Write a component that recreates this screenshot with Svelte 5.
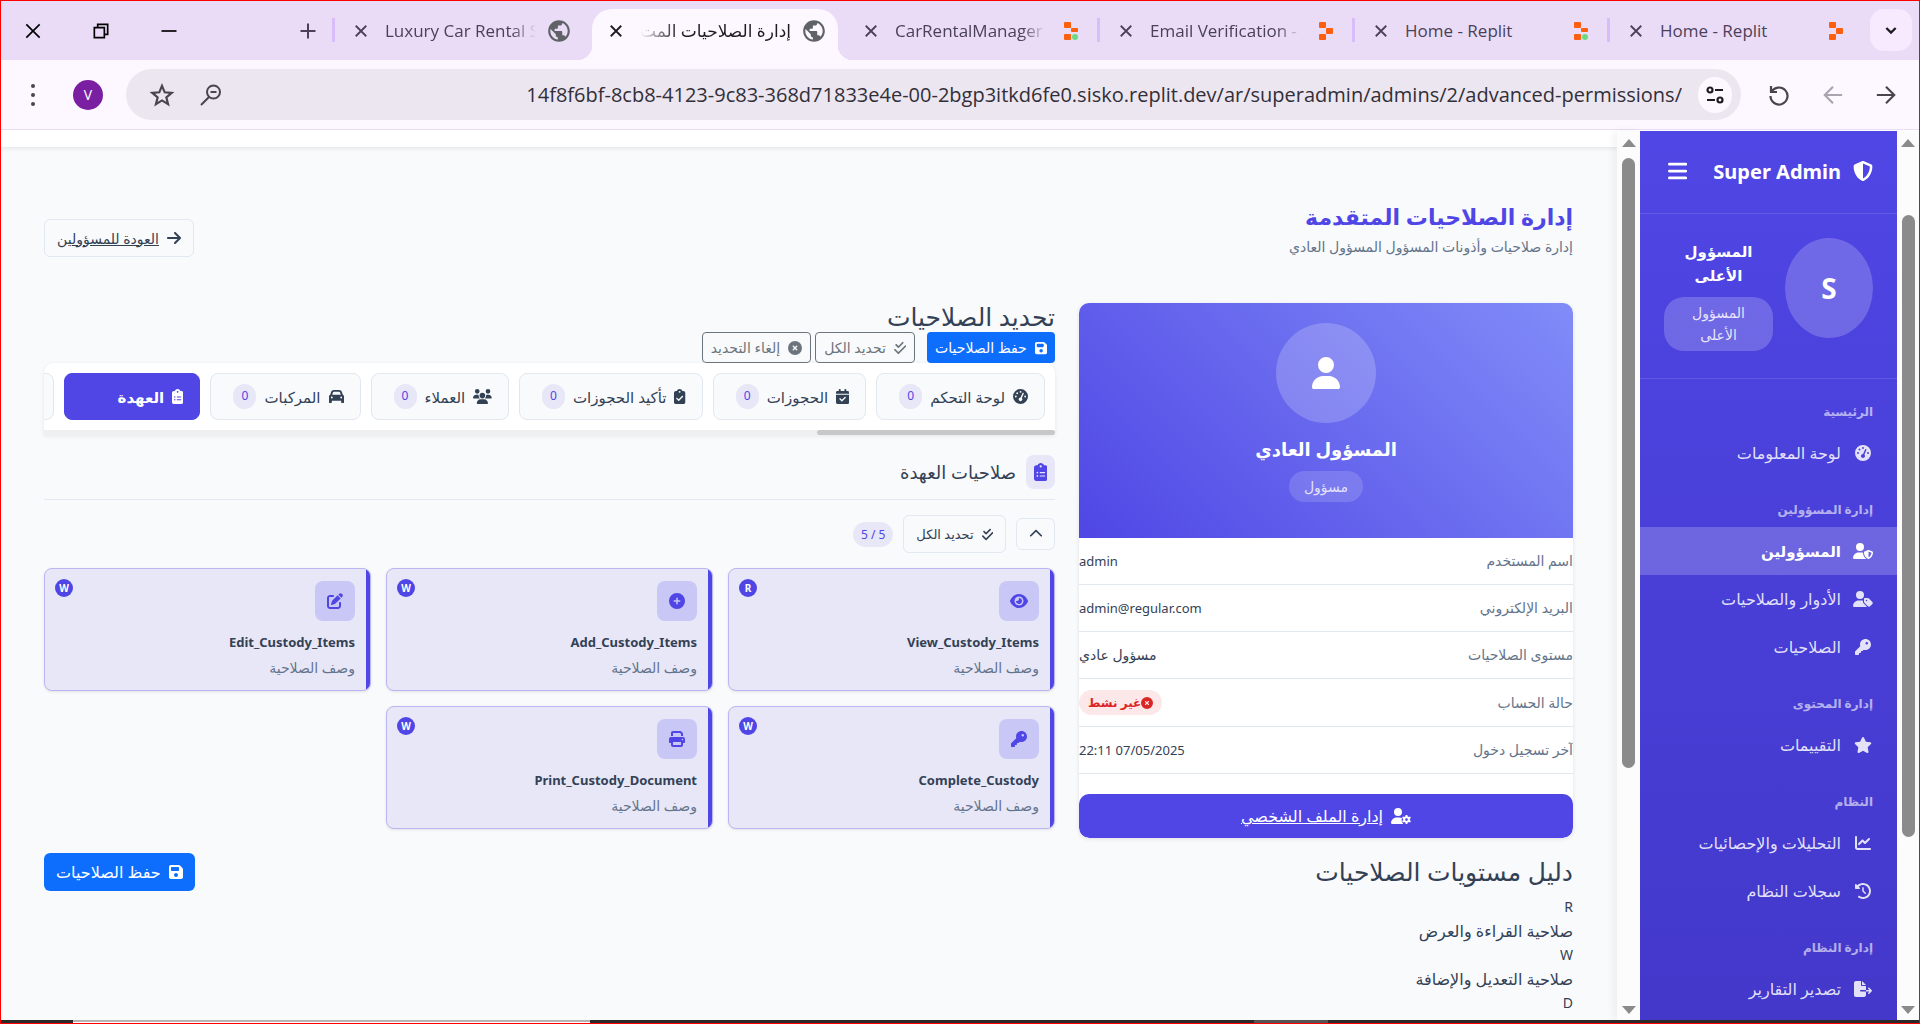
<script>
  const person = 'M224 256A128 128 0 1 0 224 0a128 128 0 1 0 0 256z';
  const board = 'M192 0c-41.8 0-77.4 26.7-90.5 64H64C28.7 64 0 92.7 0 128V448c0 35.3 28.7 64 64 64H320c35.3 0 64-28.7 64-64V128c0-35.3-28.7-64-64-64H282.5C269.4 26.7 233.8 0 192 0zm0 64a32 32 0 1 1 0 64 32 32 0 1 1 0-64z';

  function gear(cx, cy, teeth, outer, inner) {
    const points = [];
    const step = (Math.PI * 2) / teeth;
    for (let i = 0; i < teeth; i++) {
      const a = i * step;
      for (const [offset, r] of [[-0.3, inner], [-0.18, outer], [0.18, outer], [0.3, inner]]) {
        points.push(`${(cx + Math.sin(a + offset * step) * r).toFixed(1)} ${(cy - Math.cos(a + offset * step) * r).toFixed(1)}`);
      }
    }
    return `M${points.join('L')}zM${cx - 44} ${cy}a44 44 0 1 0 88 0 44 44 0 1 0 -88 0z`;
  }

  const icons = {
    user: [448, person + 'M178.3 304C79.8 304 0 383.8 0 482.3C0 498.7 13.3 512 29.7 512H418.3c16.4 0 29.7-13.3 29.7-29.7C448 383.8 368.2 304 269.7 304H178.3z'],
    shield: [512, 'M256 0c4.6 0 9.2 1 13.4 2.9L457.7 82.8c22 9.3 38.4 31 38.3 57.2c-.5 99.2-41.3 280.7-213.6 363.2c-16.7 8-36.1 8-52.8 0C57.3 420.7 16.5 239.2 16 140c-.1-26.2 16.3-47.9 38.3-57.2L242.7 2.9C246.8 1 251.4 0 256 0zm0 66.8V444.8C394 378 431.1 230.1 432 141.4L256 66.8z'],
    bars: [448, 'M0 96C0 78.3 14.3 64 32 64H416c17.7 0 32 14.3 32 32s-14.3 32-32 32H32C14.3 128 0 113.7 0 96zM0 256c0-17.7 14.3-32 32-32H416c17.7 0 32 14.3 32 32s-14.3 32-32 32H32c-17.7 0-32-14.3-32-32zM448 416c0 17.7-14.3 32-32 32H32c-17.7 0-32-14.3-32-32s14.3-32 32-32H416c17.7 0 32 14.3 32 32z'],
    gauge: [512, 'M0 256a256 256 0 1 1 512 0A256 256 0 1 1 0 256zM288 96a32 32 0 1 0 -64 0 32 32 0 1 0 64 0zM256 416c35.3 0 64-28.7 64-64c0-17.4-6.9-33.1-18.1-44.6L366 161.7c5.3-12.1-.2-26.3-12.3-31.6s-26.3 .2-31.6 12.3L257.9 288c-.6 0-1.3 0-1.9 0c-35.3 0-64 28.7-64 64s28.7 64 64 64zM176 144a32 32 0 1 0 -64 0 32 32 0 1 0 64 0zM96 288a32 32 0 1 0 0-64 32 32 0 1 0 0 64zm352-32a32 32 0 1 0 -64 0 32 32 0 1 0 64 0z'],
    key: [512, 'M336 352c97.2 0 176-78.8 176-176S433.2 0 336 0S160 78.8 160 176c0 18.7 2.9 36.8 8.3 53.7L7 391c-4.5 4.5-7 10.6-7 17v80c0 13.3 10.7 24 24 24h80c13.3 0 24-10.7 24-24V448h40c13.3 0 24-10.7 24-24V384h40c6.4 0 12.5-2.5 17-7l33.3-33.3c16.9 5.4 35 8.3 53.7 8.3zM376 96a40 40 0 1 1 0 80 40 40 0 1 1 0-80z'],
    star: [576, 'M316.9 18C311.6 7 300.4 0 288.1 0s-23.4 7-28.8 18L195 150.3 51.4 171.5c-12 1.8-22 10.2-25.7 21.7s-.7 24.2 7.9 32.7L137.8 329 113.2 474.7c-2 12 3 24.2 12.9 31.3s23 8 33.8 2.3l128.3-68.5 128.3 68.5c10.8 5.7 23.9 4.9 33.8-2.3s14.9-19.3 12.9-31.3L438.5 329 542.7 225.9c8.6-8.5 11.7-21.2 7.9-32.7s-13.7-19.9-25.7-21.7L381.2 150.3 316.9 18z'],
    chart: [512, 'M64 64c0-17.7-14.3-32-32-32S0 46.3 0 64V400c0 44.2 35.8 80 80 80H480c17.7 0 32-14.3 32-32s-14.3-32-32-32H80c-8.8 0-16-7.2-16-16V64zm406.6 86.6c12.5-12.5 12.5-32.8 0-45.3s-32.8-12.5-45.3 0L320 210.7l-57.4-57.4c-12.5-12.5-32.8-12.5-45.3 0l-112 112c-12.5 12.5-12.5 32.8 0 45.3s32.8 12.5 45.3 0L240 221.3l57.4 57.4c12.5 12.5 32.8 12.5 45.3 0l128-128z'],
    history: [512, 'M75 75L41 41C25.9 25.9 0 36.6 0 57.9V168c0 13.3 10.7 24 24 24H134.1c21.4 0 32.1-25.9 17-41l-30.8-30.8C155 85.5 203 64 256 64c106 0 192 86 192 192s-86 192-192 192c-40.8 0-78.6-12.7-109.7-34.4c-14.5-10.1-34.4-6.6-44.6 7.9s-6.6 34.4 7.9 44.6C151.2 495 201.7 512 256 512c141.4 0 256-114.6 256-256S397.4 0 256 0C185.3 0 121.3 28.7 75 75zm181 53c-13.3 0-24 10.7-24 24V256c0 6.4 2.5 12.5 7 17l72 72c9.4 9.4 24.6 9.4 33.9 0s9.4-24.6 0-33.9l-65-65V152c0-13.3-10.7-24-24-24z'],
    fileExport: [576, 'M0 64C0 28.7 28.7 0 64 0H224V128c0 17.7 14.3 32 32 32H384V288H216c-13.3 0-24 10.7-24 24s10.7 24 24 24H384V448c0 35.3-28.7 64-64 64H64c-35.3 0-64-28.7-64-64V64zM384 336V288H494.1l-39-39c-9.4-9.4-9.4-24.6 0-33.9s24.6-9.4 33.9 0l80 80c9.4 9.4 9.4 24.6 0 33.9l-80 80c-9.4 9.4-24.6 9.4-33.9 0s-9.4-24.6 0-33.9l39-39H384zm0-208H256V0L384 128z'],
    save: [448, 'M64 32C28.7 32 0 60.7 0 96V416c0 35.3 28.7 64 64 64H384c35.3 0 64-28.7 64-64V173.3c0-17-6.7-33.3-18.7-45.3L352 50.7C340 38.7 323.7 32 306.7 32H64zm0 96c0-17.7 14.3-32 32-32H288c17.7 0 32 14.3 32 32v64c0 17.7-14.3 32-32 32H96c-17.7 0-32-14.3-32-32V128zM224 288a64 64 0 1 1 0 128 64 64 0 1 1 0-128z'],
    checks: [448, 'M342.6 86.6c12.5-12.5 12.5-32.8 0-45.3s-32.8-12.5-45.3 0L160 178.7l-57.4-57.4c-12.5-12.5-32.8-12.5-45.3 0s-12.5 32.8 0 45.3l80 80c12.5 12.5 32.8 12.5 45.3 0l160-160zm96 128c12.5-12.5 12.5-32.8 0-45.3s-32.8-12.5-45.3 0L160 402.7 54.6 297.4c-12.5-12.5-32.8-12.5-45.3 0s-12.5 32.8 0 45.3l128 128c12.5 12.5 32.8 12.5 45.3 0l256-256z'],
    cross: [512, 'M256 512A256 256 0 1 0 256 0a256 256 0 1 0 0 512zM175 175c9.4-9.4 24.6-9.4 33.9 0l47 47 47-47c9.4-9.4 24.6-9.4 33.9 0s9.4 24.6 0 33.9l-47 47 47 47c9.4 9.4 9.4 24.6 0 33.9s-24.6 9.4-33.9 0l-47-47-47 47c-9.4 9.4-24.6 9.4-33.9 0s-9.4-24.6 0-33.9l47-47-47-47c-9.4-9.4-9.4-24.6 0-33.9z'],
    plus: [512, 'M256 512A256 256 0 1 0 256 0a256 256 0 1 0 0 512zM232 344V280H168c-13.3 0-24-10.7-24-24s10.7-24 24-24h64V168c0-13.3 10.7-24 24-24s24 10.7 24 24v64h64c13.3 0 24 10.7 24 24s-10.7 24-24 24H280v64c0 13.3-10.7 24-24 24s-24-10.7-24-24z'],
    calendar: [448, 'M128 0c17.7 0 32 14.3 32 32V64H288V32c0-17.7 14.3-32 32-32s32 14.3 32 32V64h48c26.5 0 48 21.5 48 48v48H0V112C0 85.5 21.5 64 48 64H96V32c0-17.7 14.3-32 32-32zM0 192H448V464c0 26.5-21.5 48-48 48H48c-26.5 0-48-21.5-48-48V192zM329 305c9.4-9.4 9.4-24.6 0-33.9s-24.6-9.4-33.9 0l-95 95-47-47c-9.4-9.4-24.6-9.4-33.9 0s-9.4 24.6 0 33.9l64 64c9.4 9.4 24.6 9.4 33.9 0L329 305z'],
    clipCheck: [384, board + 'M305 273L177 401c-9.4 9.4-24.6 9.4-33.9 0L79 337c-9.4-9.4-9.4-24.6 0-33.9s24.6-9.4 33.9 0l47 47L271 239c9.4-9.4 24.6-9.4 33.9 0s9.4 24.6 0 33.9z'],
    clipList: [384, board + 'M72 272a24 24 0 1 1 48 0 24 24 0 1 1 -48 0zm104-16H304c8.8 0 16 7.2 16 16s-7.2 16-16 16H176c-8.8 0-16-7.2-16-16s7.2-16 16-16zM72 368a24 24 0 1 1 48 0 24 24 0 1 1 -48 0zm88 0c0-8.8 7.2-16 16-16H304c8.8 0 16 7.2 16 16s-7.2 16-16 16H176c-8.8 0-16-7.2-16-16z'],
    users: [640, 'M144 0a80 80 0 1 1 0 160A80 80 0 1 1 144 0zM512 0a80 80 0 1 1 0 160A80 80 0 1 1 512 0zM0 298.7C0 239.8 47.8 192 106.7 192h42.7c15.9 0 31 3.5 44.6 9.7c-1.3 7.2-1.9 14.7-1.9 22.3c0 38.2 16.8 72.5 43.3 96c-.2 0-.4 0-.7 0H21.3C9.6 320 0 310.4 0 298.7zM405.3 320c-.2 0-.4 0-.7 0c26.6-23.5 43.3-57.8 43.3-96c0-7.6-.7-15-1.9-22.3c13.6-6.3 28.7-9.7 44.6-9.7h42.7C592.2 192 640 239.8 640 298.7c0 11.8-9.6 21.3-21.3 21.3H405.3zM224 224a96 96 0 1 1 192 0 96 96 0 1 1 -192 0zM128 485.3C128 411.7 187.7 352 261.3 352H378.7C452.3 352 512 411.7 512 485.3c0 14.7-11.9 26.7-26.7 26.7H154.7c-14.7 0-26.7-11.9-26.7-26.7z'],
    car: [512, 'M135.2 117.4L109.1 192H402.9l-26.1-74.6C372.3 104.6 360.2 96 346.6 96H165.4c-13.6 0-25.7 8.6-30.2 21.4zM39.6 196.8L74.8 96.3C88.3 57.8 124.6 32 165.4 32H346.6c40.8 0 77.1 25.8 90.6 64.3l35.2 100.5c23.2 9.6 39.6 32.5 39.6 59.2V400v48c0 17.7-14.3 32-32 32H448c-17.7 0-32-14.3-32-32V400H96v48c0 17.7-14.3 32-32 32H32c-17.7 0-32-14.3-32-32V400 256c0-26.7 16.4-49.6 39.6-59.2zM128 288a32 32 0 1 0 -64 0 32 32 0 1 0 64 0zm288 32a32 32 0 1 0 0-64 32 32 0 1 0 0 64z'],
    arrow: [448, 'M438.6 278.6c12.5-12.5 12.5-32.8 0-45.3l-160-160c-12.5-12.5-32.8-12.5-45.3 0s-12.5 32.8 0 45.3L338.8 224 32 224c-17.7 0-32 14.3-32 32s14.3 32 32 32l306.7 0L233.4 393.4c-12.5 12.5-12.5 32.8 0 45.3s32.8 12.5 45.3 0l160-160z'],
    up: [512, 'M233.4 105.4c12.5-12.5 32.8-12.5 45.3 0l192 192c12.5 12.5 12.5 32.8 0 45.3s-32.8 12.5-45.3 0L256 173.3 86.6 342.6c-12.5 12.5-32.8 12.5-45.3 0s-12.5-32.8 0-45.3l192-192z'],
    eye: [576, 'M288 32c-80.8 0-145.5 36.8-192.6 80.6C48.6 156 17.3 208 2.5 243.7c-3.3 7.9-3.3 16.7 0 24.6C17.3 304 48.6 356 95.4 399.4C142.5 443.2 207.2 480 288 480s145.5-36.8 192.6-80.6c46.8-43.5 78.1-95.4 93-131.1c3.3-7.9 3.3-16.7 0-24.6c-14.9-35.7-46.2-87.7-93-131.1C433.5 68.8 368.8 32 288 32zM144 256a144 144 0 1 1 288 0 144 144 0 1 1 -288 0zm144-64c0 35.3-28.7 64-64 64c-7.1 0-13.9-1.2-20.3-3.3c-5.5-1.8-11.9 1.6-11.7 7.4c.3 6.9 1.3 13.8 3.2 20.7c13.7 51.2 66.4 81.6 117.6 67.9s81.6-66.4 67.9-117.6c-11.1-41.5-47.8-69.4-88.6-71.1c-5.8-.2-9.2 6.1-7.4 11.7c2.1 6.4 3.3 13.2 3.3 20.3z'],
    print: [512, 'M128 0C92.7 0 64 28.7 64 64v96h64V64H354.7L384 93.3V160h64V93.3c0-17-6.7-33.3-18.7-45.3L400 18.7C388 6.7 371.7 0 354.7 0H128zM384 352v96H128V352H384zm64 32h32c17.7 0 32-14.3 32-32V256c0-35.3-28.7-64-64-64H64c-35.3 0-64 28.7-64 64v96c0 17.7 14.3 32 32 32H64v64c0 35.3 28.7 64 64 64H384c35.3 0 64-28.7 64-64V384zM432 248a24 24 0 1 1 0 48 24 24 0 1 1 0-48z'],
    edit: [512, 'M471.6 21.7c-21.9-21.9-57.3-21.9-79.2 0L362.3 51.7l97.9 97.9 30.1-30.1c21.9-21.9 21.9-57.3 0-79.2L471.6 21.7zm-299.2 220c-6.1 6.1-10.8 13.6-13.5 21.9l-29.6 88.8c-2.9 8.6-.6 18.1 5.8 24.6s15.9 8.7 24.6 5.8l88.8-29.6c8.2-2.7 15.7-7.4 21.9-13.5L437.7 172.3 339.7 74.3 172.4 241.7zM96 64C43 64 0 107 0 160V416c0 53 43 96 96 96H352c53 0 96-43 96-96V320c0-17.7-14.3-32-32-32s-32 14.3-32 32v96c0 17.7-14.3 32-32 32H96c-17.7 0-32-14.3-32-32V160c0-17.7 14.3-32 32-32h96c17.7 0 32-14.3 32-32s-14.3-32-32-32H96z'],
    userShield: [640, person + 'M178.3 304C79.8 304 0 383.8 0 482.3C0 498.7 13.3 512 29.7 512H418.3c1.8 0 3.5-.2 5.3-.5c-76.3-55.1-99.8-141-103.1-200.2c-16.1-4.8-33.1-7.3-50.7-7.3H178.3zm308.8-78.3l-120 48C358 277.4 352 286.2 352 296c0 63.3 25.9 168.8 134.8 214.2c5.9 2.5 12.6 2.5 18.5 0C614.1 464.8 640 359.3 640 296c0-9.8-6-18.6-15.1-22.3l-120-48c-5.7-2.3-12.1-2.3-17.8 0zM591.4 312c-3.9 50.7-27.2 116.7-95.4 149.7V273.8L591.4 312z'],
    userTag: [640, person + 'M178.3 304C79.8 304 0 383.8 0 482.3C0 498.7 13.3 512 29.7 512H418.3c10 0 18.8-4.9 24.2-12.5l-99.2-99.2c-14.9-14.9-23.3-35.1-23.3-56.1v-33c-15.9-4.7-32.8-7.2-50.3-7.2H178.3zM384 224c-17.7 0-32 14.3-32 32v82.7c0 17 6.7 33.3 18.7 45.3L478.1 491.3c18.7 18.7 49.1 18.7 67.9 0l73.4-73.4c18.7-18.7 18.7-49.1 0-67.9L512 242.7c-12-12-28.3-18.7-45.3-18.7H384zm24 80a24 24 0 1 1 48 0 24 24 0 1 1 -48 0z'],
    userGear: [640, person + 'M178.3 304C79.8 304 0 383.8 0 482.3C0 498.7 13.3 512 29.7 512H392c-30-34-48-70-52-110c-2-30 4-60 12-79c-25-12-52-19-82.300-19H178.3z' + gear(496, 368, 6, 150, 108)]
  };

  const browserTabs = [
    { title: 'Luxury Car Rental S', icon: 'globe' },
    { title: 'إدارة الصلاحيات المت', icon: 'globe', active: true },
    { title: 'CarRentalManager', icon: 'dot' },
    { title: 'Email Verification -', icon: 'replit', line: true },
    { title: 'Home - Replit', icon: 'dot', line: true },
    { title: 'Home - Replit', icon: 'replit', line: true }
  ];

  const menu = [
    { title: 'الرئيسية', items: [{ icon: 'gauge', text: 'لوحة المعلومات' }] },
    {
      title: 'إدارة المسؤولين',
      items: [
        { icon: 'userShield', text: 'المسؤولين', active: true },
        { icon: 'userTag', text: 'الأدوار والصلاحيات' },
        { icon: 'key', text: 'الصلاحيات' }
      ]
    },
    { title: 'إدارة المحتوى', items: [{ icon: 'star', text: 'التقييمات' }] },
    {
      title: 'النظام',
      items: [
        { icon: 'chart', text: 'التحليلات والإحصائيات' },
        { icon: 'history', text: 'سجلات النظام' }
      ]
    },
    { title: 'إدارة النظام', items: [{ icon: 'fileExport', text: 'تصدير التقارير' }] }
  ];

  const details = [
    ['اسم المستخدم', 'admin'],
    ['البريد الإلكتروني', 'admin@regular.com'],
    ['مستوى الصلاحيات', 'مسؤول عادي'],
    ['حالة الحساب', null],
    ['آخر تسجيل دخول', '22:11 07/05/2025']
  ];

  const guide = ['R', 'صلاحية القراءة والعرض', 'W', 'صلاحية التعديل والإضافة', 'D'];

  const groups = [
    { icon: 'gauge', text: 'لوحة التحكم', count: 0 },
    { icon: 'calendar', text: 'الحجوزات', count: 0 },
    { icon: 'clipCheck', text: 'تأكيد الحجوزات', count: 0 },
    { icon: 'users', text: 'العملاء', count: 0 },
    { icon: 'car', text: 'المركبات', count: 0 },
    { icon: 'clipList', text: 'العهدة', active: true }
  ];

  const permissions = [
    { icon: 'eye', name: 'View_Custody_Items', level: 'R' },
    { icon: 'plus', name: 'Add_Custody_Items', level: 'W' },
    { icon: 'edit', name: 'Edit_Custody_Items', level: 'W' },
    { icon: 'key', name: 'Complete_Custody', level: 'W' },
    { icon: 'print', name: 'Print_Custody_Document', level: 'W' }
  ];
</script>

{#snippet fa(name)}
  <svg class="fa" viewBox="0 0 {icons[name][0]} 512" style:width="{icons[name][0] / 512}em" aria-hidden="true">
    <path d={icons[name][1]} fill="currentColor" fill-rule="evenodd" />
  </svg>
{/snippet}

{#snippet line(d, size, width)}
  <svg width={size} height={size} viewBox="0 0 24 24" fill="none" stroke="currentColor" stroke-width={width} aria-hidden="true">
    <path {d} />
  </svg>
{/snippet}

{#snippet scrollbar(kind)}
  <div class="scrollbar {kind}" aria-hidden="true">
    <i class="tri"></i>
    <i class="before"></i>
    <i class="thumb"></i>
    <i class="after"></i>
    <i class="tri down"></i>
  </div>
{/snippet}

<div class="window">
  <header class="strip">
    <div class="controls">
      <button aria-label="Close">{@render line('M4 4L20 20M20 4L4 20', 20, 2)}</button>
      <button aria-label="Restore">{@render line('M4 8h12v12H4zM8 8V4h12v12h-4', 20, 2)}</button>
      <button aria-label="Minimize">{@render line('M3 12h18', 20, 2)}</button>
    </div>
    <button class="new-tab" aria-label="New tab">{@render line('M12 3v18M3 12h18', 20, 2.4)}</button>
    <nav class="tabs">
      {#each browserTabs as tab, i}
        <div class="tab" class:active={tab.active} class:line={tab.line || i === 0}>
          <div class="tab-body">
            <button aria-label="Close tab">{@render line('M5 5L19 19M19 5L5 19', 18, 2.4)}</button>
            <a href="#tab{i}" class="tab-title" class:fade={i < 4} dir={tab.active ? 'rtl' : 'ltr'}>{tab.title}</a>
            {#if tab.icon === 'globe'}
              <svg width="26" height="26" viewBox="0 0 24 24" aria-hidden="true">
                <path fill="#5f6368" d="M12 2C6.480 2 2 6.480 2 12s4.480 10 10 10 10-4.480 10-10S17.520 2 12 2zm-1 17.930c-3.950-.49-7-3.850-7-7.930 0-.62.08-1.210.21-1.790L9 15v1c0 1.100.9 2 2 2v1.930zm6.900-2.540c-.26-.81-1-1.390-1.900-1.390h-1v-3c0-.55-.45-1-1-1H8v-2h2c.55 0 1-.45 1-1V7h2c1.100 0 2-.9 2-2v-.41c2.930 1.190 5 4.060 5 7.410 0 2.080-.8 3.970-2.100 5.390z" />
              </svg>
            {:else}
              <svg class="replit" width="20" height="20" viewBox="0 0 20 20" aria-hidden="true">
                <rect x="3" y="1" width="7" height="6" rx="1" fill="#fd5f0e" />
                <rect x="10" y="7" width="7" height={tab.icon === 'dot' ? 4 : 6} rx="1" fill="#fd5f0e" />
                <rect x="3" y="13" width="7" height="6" rx="1" fill="#fd5f0e" />
                {#if tab.icon === 'dot'}<circle cx="14" cy="16" r="3" fill="#6cd97e" />{/if}
              </svg>
            {/if}
          </div>
        </div>
      {/each}
    </nav>
    <button class="tab-search" aria-label="Search tabs">{@render line('M5 9l7 7 7-7', 16, 3.4)}</button>
  </header>

  <div class="toolbar">
    <button class="dots" aria-label="Menu"><i></i><i></i><i></i></button>
    <button class="account">V</button>
    <div class="omnibox">
      <button aria-label="Bookmark">
        <svg width="26" height="26" viewBox="0 0 24 24" fill="none" stroke="currentColor" stroke-width="2" aria-hidden="true"><path d="M12 3.500l2.500 6 6.500.5-5 4.200 1.600 6.300L12 17l-5.600 3.500L8 14.200 3 10l6.500-.5z" /></svg>
      </button>
      <button aria-label="Zoom">
        <svg width="24" height="24" viewBox="0 0 24 24" fill="none" stroke="currentColor" stroke-width="2" aria-hidden="true"><circle cx="14.500" cy="9" r="6.500" /><path d="M10 14l-8 8M11.500 9h6" /></svg>
      </button>
      <input aria-label="Address" dir="ltr" value="14f8f6bf-8cb8-4123-9c83-368d71833e4e-00-2bgp3itkd6fe0.sisko.replit.dev/ar/superadmin/admins/2/advanced-permissions/" />
      <button class="site" aria-label="Site settings">
        <svg width="20" height="20" viewBox="0 0 20 20" fill="none" stroke="currentColor" stroke-width="2.200" aria-hidden="true"><circle cx="5" cy="5" r="2.500" /><path d="M10 5h8M2 15h8" /><circle cx="15" cy="15" r="2.500" /></svg>
      </button>
    </div>
    <button aria-label="Reload">
      <svg width="24" height="24" viewBox="0 0 24 24" fill="none" stroke="currentColor" stroke-width="2.200" aria-hidden="true"><path d="M4 3v6h6M4.500 9a8.500 8.500 0 1 1-1 4" /></svg>
    </button>
    <button class="off" aria-label="Back">{@render line('M22 12H4M12 3L3 12l9 9', 22, 2.3)}</button>
    <button aria-label="Forward">{@render line('M2 12h18M12 3l9 9-9 9', 22, 2.3)}</button>
  </div>

  <div class="view">
    <div class="main-pane" dir="rtl">
      <div class="navbar"></div>
      <main>
        <div class="page-head">
          <div>
            <h1>إدارة الصلاحيات المتقدمة</h1>
            <p>إدارة صلاحيات وأذونات المسؤول المسؤول العادي</p>
          </div>
          <a class="back" href="#admins"><i>{@render fa('arrow')}</i><span>العودة للمسؤولين</span></a>
        </div>

        <div class="columns">
          <section class="side">
            <div class="profile">
              <div class="profile-head">
                <div class="avatar">{@render fa('user')}</div>
                <h2>المسؤول العادي</h2>
                <span class="role">مسؤول</span>
              </div>
              <dl>
                {#each details as [label, value]}
                  <div>
                    <dt>{label}</dt>
                    <dd class:arabic={/[ء-ي]/.test(value ?? '')}>
                      {#if value}<bdi>{value}</bdi>{:else}<span class="status">{@render fa('cross')}غير نشط</span>{/if}
                    </dd>
                  </div>
                {/each}
              </dl>
              <a class="manage" href="#profile">{@render fa('userGear')}<span>إدارة الملف الشخصي</span></a>
            </div>
            <h3>دليل مستويات الصلاحيات</h3>
            <div class="guide">
              {#each guide as text}<div class:letter={text.length === 1}>{text}</div>{/each}
            </div>
          </section>

          <section class="work">
            <h3>تحديد الصلاحيات</h3>
            <div class="actions">
              <button class="save small">{@render fa('save')}حفظ الصلاحيات</button>
              <button class="outline first">{@render fa('checks')}تحديد الكل</button>
              <button class="outline">{@render fa('cross')}إلغاء التحديد</button>
            </div>

            <div class="group-box">
              <div class="groups">
                {#each groups as group}
                  <button class="group" class:on={group.active}>
                    {@render fa(group.icon)}<span>{group.text}</span><b>{group.count ?? ''}</b>
                  </button>
                {/each}
                <button class="group" aria-label="التالي"></button>
              </div>
              <div class="hbar"><i></i></div>
            </div>

            <div class="section-head">
              <span class="chip">{@render fa('clipList')}</span>
              <h4>صلاحيات العهدة</h4>
            </div>

            <div class="section-tools">
              <button class="fold" aria-label="طي">{@render fa('up')}</button>
              <button class="all">{@render fa('checks')}تحديد الكل</button>
              <span class="tally" dir="ltr">5 / 5</span>
            </div>

            <div class="cards">
              {#each permissions as item}
                <article>
                  <span class="level">{item.level}</span>
                  <span class="tile">{@render fa(item.icon)}</span>
                  <h5>{item.name}</h5>
                  <p>وصف الصلاحية</p>
                </article>
              {/each}
            </div>

            <div class="submit"><button class="save">{@render fa('save')}حفظ الصلاحيات</button></div>
          </section>
        </div>
      </main>
    </div>

    {@render scrollbar('inner')}

    <aside dir="rtl">
      <div class="brand">
        {@render fa('shield')}
        <strong>Super Admin</strong>
        <button aria-label="القائمة">{@render fa('bars')}</button>
      </div>
      <div class="me">
        <div class="initial">S</div>
        <div class="who">
          <strong>المسؤول الأعلى</strong>
          <span>المسؤول الأعلى</span>
        </div>
      </div>
      <nav>
        {#each menu as part}
          <h6>{part.title}</h6>
          {#each part.items as item}
            <a href="#{item.icon}" class:current={item.active}><i>{@render fa(item.icon)}</i>{item.text}</a>
          {/each}
        {/each}
      </nav>
    </aside>

    {@render scrollbar('outer')}
  </div>

  <div class="taskbar"><i class="pale"></i><i class="mid"></i></div>
</div>

<style>
  :global(body) {
    margin: 0;
    background: #fff;
  }
  .window {
    --ink: #334155;
    --muted: #64748b;
    --brand: #4f46e5;
    --line: #e2e8f0;
    box-sizing: border-box;
    height: 100vh;
    display: flex;
    flex-direction: column;
    overflow: hidden;
    border: 1px solid #f00;
    font-family: 'Noto Sans', 'DejaVu Sans', sans-serif;
    color: var(--ink);
  }
  .window :global(*) {
    box-sizing: border-box;
  }
  button {
    border: 0;
    padding: 0;
    background: none;
    font: inherit;
    color: inherit;
    display: flex;
    align-items: center;
    justify-content: center;
    flex: none;
  }
  h1, h2, h3, h4, h5, h6, p, dl, dd {
    margin: 0;
    font-weight: 400;
  }
  svg {
    flex: none;
    display: block;
  }
  .fa {
    height: 1em;
  }

  /* Browser frame */
  .strip {
    flex: none;
    height: 59px;
    display: flex;
    background: #eadcf7;
    font-family: 'Open Sans', 'DejaVu Sans', sans-serif;
    color: #4a4159;
  }
  .controls {
    display: flex;
    align-items: center;
    padding-left: 22px;
    gap: 48px;
    color: #000;
  }
  .new-tab {
    margin: 0 14px 0 auto;
  }
  .tabs {
    display: flex;
    flex: 0 1 1530px;
    min-width: 0;
  }
  .tab {
    flex: 1;
    min-width: 0;
    display: flex;
    align-items: center;
    padding: 8px 4px 0 5px;
    background: linear-gradient(#d9bdfb, #d9bdfb) 0 17px / 3px 24px no-repeat;
  }
  .tab:not(.line) {
    background: none;
  }
  .tab-body {
    position: relative;
    flex: 1;
    min-width: 0;
    height: 51px;
    display: flex;
    align-items: center;
    gap: 10px;
    padding: 0 11px 7px 15px;
  }
  .tab-body button {
    margin-right: 5px;
  }
  .tab-title {
    flex: 1;
    min-width: 0;
    overflow: hidden;
    white-space: nowrap;
    color: inherit;
    text-decoration: none;
    font-size: 17px;
    line-height: 34px;
  }
  .fade {
    mask-image: linear-gradient(to right, #000 84%, transparent);
  }
  .active .tab-title {
    mask-image: linear-gradient(to left, #000 75%, transparent);
  }
  .replit {
    margin: 0 1px 0 5px;
  }
  .active .tab-body {
    background: #fdf7ff;
    border-radius: 20px 20px 0 0;
    color: #1d1b20;
  }
  .active .tab-body::before,
  .active .tab-body::after {
    content: '';
    position: absolute;
    bottom: 0;
    width: 14px;
    height: 14px;
    left: -14px;
    background: radial-gradient(circle at 0 0, transparent 14px, #fdf7ff 14px);
  }
  .active .tab-body::after {
    left: auto;
    right: -14px;
    background: radial-gradient(circle at 100% 0, transparent 14px, #fdf7ff 14px);
  }
  .tab-search {
    width: 42px;
    height: 42px;
    margin: 8px 7px 0 8px;
    border-radius: 14px;
    background: #f7eafe;
    color: #1d1b20;
  }
  .toolbar {
    flex: none;
    height: 70px;
    display: flex;
    align-items: center;
    gap: 31px;
    padding: 0 22px 0 29px;
    background: #fdf7ff;
    border-bottom: 1px solid #e8def0;
    color: #49454f;
    font-family: 'Open Sans', sans-serif;
  }
  .dots {
    flex-direction: column;
    gap: 5px;
    width: 6px;
  }
  .dots i {
    width: 4px;
    height: 4px;
    border-radius: 50%;
    background: currentColor;
  }
  .account {
    width: 30px;
    height: 30px;
    margin: 0 -8px 0 6px;
    border-radius: 50%;
    background: #7b1fa2;
    color: #fff;
    font-size: 14px;
  }
  .omnibox {
    flex: 1;
    min-width: 0;
    height: 51px;
    display: flex;
    align-items: center;
    gap: 24px;
    padding: 0 9px 0 23px;
    margin-right: -5px;
    border-radius: 26px;
    background: #ece6f0;
  }
  .omnibox input {
    flex: 1;
    min-width: 0;
    height: 40px;
    border: 0;
    padding: 0;
    margin-right: -8px;
    background: none;
    font: 20px 'Open Sans', sans-serif;
    color: #322f38;
    text-align: right;
  }
  .site {
    width: 34px;
    height: 36px;
    border-radius: 18px;
    background: #fdf7ff;
    color: #1d1b20;
  }
  .off {
    color: #a9a4ae;
  }

  /* Viewport */
  .view {
    flex: 1;
    min-height: 0;
    display: flex;
    border-top: 1px solid #fff;
  }
  .main-pane {
    flex: 1;
    min-width: 0;
    overflow: hidden;
    background: #f9fafc;
  }
  .navbar {
    height: 16px;
    background: #fff;
    box-shadow: 0 2px 4px rgba(0, 0, 0, 0.08);
  }
  .scrollbar {
    flex: none;
    width: 23px;
    display: flex;
    flex-direction: column;
    align-items: center;
    padding: 8px 0 6px;
    background: #fcfcfc;
    box-shadow: -3px 0 8px rgba(0, 0, 0, 0.06);
  }
  .outer {
    width: 22px;
    box-shadow: none;
  }
  .tri {
    border: 7px solid transparent;
    border-top: 0;
    border-bottom: 8px solid #8b8b8b;
  }
  .tri.down {
    border-bottom: 0;
    border-top: 8px solid #8b8b8b;
  }
  .thumb {
    width: 13px;
    flex: 610 0 0;
    border-radius: 7px;
    background: #8b8b8b;
  }
  .before {
    flex: 11 0 0;
  }
  .after {
    flex: 238 0 0;
  }
  .outer .before {
    flex-grow: 68;
  }
  .outer .thumb {
    flex-grow: 622;
  }
  .outer .after {
    flex-grow: 169;
  }

  /* Sidebar */
  aside {
    flex: none;
    width: 257px;
    overflow: hidden;
    background: linear-gradient(#4f46e5, #4338ca);
    color: #fff;
  }
  .brand {
    height: 83px;
    display: flex;
    align-items: center;
    gap: 12px;
    padding: 0 24px 2px;
    border-bottom: 1px solid rgba(255, 255, 255, 0.12);
    font-size: 20px;
  }
  .brand button {
    margin-right: auto;
    padding-left: 4px;
    font-size: 22px;
  }
  .me {
    display: flex;
    align-items: flex-start;
    gap: 12px;
    padding: 24px 24px 27px;
    border-bottom: 1px solid rgba(255, 255, 255, 0.12);
  }
  .initial {
    flex: none;
    width: 88px;
    height: 100px;
    display: flex;
    align-items: center;
    justify-content: center;
    border-radius: 50%;
    background: rgba(255, 255, 255, 0.2);
    font-size: 28px;
    font-weight: 700;
  }
  .who {
    flex: 1;
    text-align: center;
  }
  .who strong {
    display: block;
    padding: 1px 16px 0;
    margin-bottom: 10px;
    font-size: 15px;
    line-height: 24px;
  }
  .who span {
    display: block;
    padding: 5px 16px;
    border-radius: 20px;
    background: rgba(255, 255, 255, 0.2);
    color: rgba(255, 255, 255, 0.85);
    font-size: 14px;
    line-height: 22px;
  }
  h6 {
    height: 50px;
    padding: 24px 24px 0;
    font-size: 12px;
    line-height: 18px;
    font-weight: 700;
    color: rgba(255, 255, 255, 0.6);
  }
  aside a {
    height: 48px;
    display: flex;
    align-items: center;
    gap: 12px;
    padding: 0 24px;
    color: rgba(255, 255, 255, 0.85);
    text-decoration: none;
    font-size: 16px;
  }
  aside a i {
    width: 20px;
    display: flex;
    justify-content: center;
    font-size: 16px;
  }
  aside .current {
    background: rgba(255, 255, 255, 0.2);
    color: #fff;
    font-size: 15px;
    font-weight: 700;
  }

  /* Page */
  main {
    padding: 54px 44px 0 43px;
  }
  .page-head {
    display: flex;
    justify-content: space-between;
    align-items: flex-start;
    height: 102px;
  }
  h1 {
    font-size: 22px;
    line-height: 30px;
    font-weight: 700;
    color: var(--brand);
  }
  .page-head p {
    font-size: 14px;
    line-height: 32px;
    color: var(--muted);
  }
  .back {
    display: flex;
    align-items: center;
    gap: 8px;
    height: 38px;
    margin-top: 18px;
    padding: 0 12px;
    border: 1px solid var(--line);
    border-radius: 6px;
    color: var(--ink);
    font-size: 14px;
    text-decoration: underline;
  }
  .back i {
    font-size: 16px;
  }
  .columns {
    display: grid;
    grid-template-columns: minmax(0, 494fr) minmax(0, 1011fr);
    gap: 24px;
  }
  .profile {
    border-radius: 10px;
    background: #fff;
    box-shadow: 0 1px 4px rgba(0, 0, 0, 0.1);
    overflow: hidden;
  }
  .profile-head {
    display: flex;
    flex-direction: column;
    align-items: center;
    padding: 20px 0 36px;
    background: linear-gradient(45deg, #4f46e5, #818cf8);
    color: #fff;
  }
  .avatar {
    width: 100px;
    height: 100px;
    display: flex;
    align-items: center;
    justify-content: center;
    border-radius: 50%;
    background: rgba(255, 255, 255, 0.2);
    font-size: 32px;
  }
  h2 {
    margin: 12px 0 8px;
    font-size: 18px;
    line-height: 28px;
    font-weight: 700;
  }
  .role {
    padding: 0 15px;
    border-radius: 16px;
    background: rgba(255, 255, 255, 0.15);
    color: rgba(255, 255, 255, 0.8);
    font-size: 14px;
    line-height: 31px;
  }
  dl > div {
    display: flex;
    justify-content: space-between;
    align-items: center;
    min-height: 47px;
    padding-bottom: 1px;
    border-bottom: 1px solid var(--line);
    font-size: 13px;
  }
  dt {
    color: var(--muted);
    font-size: 14px;
  }
  .arabic {
    font-size: 14px;
  }
  .status {
    display: flex;
    align-items: center;
    height: 25px;
    margin: 11px 0 10px;
    padding: 0 9px;
    border-radius: 13px;
    background: #fce8e8;
    color: #dc2626;
    font-size: 12px;
    font-weight: 700;
  }
  .manage {
    display: flex;
    align-items: center;
    justify-content: center;
    gap: 8px;
    height: 44px;
    margin-top: 20px;
    border-radius: 10px;
    background: var(--brand);
    color: #fff;
    font-size: 16px;
  }
  h3 {
    margin-bottom: 2px;
    font-size: 25px;
    line-height: 27px;
  }
  .side h3 {
    margin: 20px 0 10px;
  }
  .guide {
    font-size: 16px;
    line-height: 24px;
  }
  .letter {
    font-size: 14px;
  }
  .actions {
    display: flex;
    gap: 4px;
    font-size: 14px;
  }
  .save {
    gap: 8px;
    height: 38px;
    padding: 0 12px;
    border-radius: 6px;
    background: #0d6efd;
    color: #fff;
    font-size: 16px;
  }
  .save.small {
    height: 31px;
    padding: 0 8px;
    border-radius: 4px;
    font-size: 14px;
  }
  .outline {
    gap: 8px;
    height: 31px;
    padding: 0 8px;
    border: 1px solid #6c757d;
    border-radius: 4px;
    color: #6c757d;
  }
  .outline.first {
    margin-right: 8px;
  }
  .group-box {
    border-radius: 10px 10px 0 0;
    background: #fff;
    box-shadow: 0 1px 4px rgba(0, 0, 0, 0.08);
  }
  .groups {
    display: flex;
    gap: 10px;
    padding: 10px;
    overflow: hidden;
  }
  .group {
    gap: 8px;
    height: 47px;
    padding: 0 16px 0 22px;
    border: 1px solid var(--line);
    border-radius: 8px;
    background: #f9fafc;
    font-size: 15px;
  }
  .group b {
    min-width: 23px;
    height: 25px;
    border-radius: 13px;
    background: #e8e7f8;
    color: var(--brand);
    font-size: 12px;
    line-height: 24px;
    font-weight: 400;
  }
  .group.on {
    border-color: var(--brand);
    background: var(--brand);
    color: #fff;
    font-weight: 700;
  }
  .group.on b {
    visibility: hidden;
  }
  .hbar {
    height: 5px;
    background: #f0f0f0;
  }
  .hbar i {
    display: block;
    width: 238px;
    height: 5px;
    border-radius: 3px;
    background: #c8c8c8;
  }
  .section-head {
    display: flex;
    align-items: center;
    gap: 10px;
    margin-top: 20px;
    padding-bottom: 10px;
    border-bottom: 1px solid var(--line);
  }
  .chip {
    width: 29px;
    height: 34px;
    display: flex;
    align-items: center;
    justify-content: center;
    border-radius: 8px;
    background: #e8e7f8;
    color: var(--brand);
    font-size: 18px;
  }
  h4 {
    font-size: 18px;
    line-height: 24px;
  }
  .section-tools {
    display: flex;
    align-items: center;
    gap: 10px;
    margin: 15px 0;
    font-size: 13px;
  }
  .fold {
    width: 39px;
    height: 32px;
    border: 1px solid var(--line);
    border-radius: 6px;
    font-size: 14px;
  }
  .all {
    gap: 8px;
    height: 38px;
    padding: 0 12px;
    border: 1px solid var(--line);
    border-radius: 6px;
  }
  .tally {
    padding: 0 8px;
    border-radius: 13px;
    background: #e8e7f8;
    color: var(--brand);
    font-size: 12px;
    line-height: 25px;
  }
  .cards {
    display: grid;
    grid-template-columns: repeat(3, minmax(0, 1fr));
    gap: 15px;
  }
  article {
    position: relative;
    height: 123px;
    padding: 12px 15px 0;
    border: 1px solid #bab5f3;
    border-radius: 8px;
    background: linear-gradient(var(--brand), var(--brand)) right / 4px 100% no-repeat #e8e7f8;
    box-shadow: 0 1px 3px rgba(0, 0, 0, 0.1);
  }
  .level {
    position: absolute;
    top: 10px;
    left: 10px;
    width: 18px;
    height: 18px;
    border-radius: 50%;
    background: var(--brand);
    color: #fff;
    font-size: 10px;
    line-height: 18px;
    font-weight: 700;
    text-align: center;
  }
  .tile {
    width: 40px;
    height: 40px;
    display: flex;
    align-items: center;
    justify-content: center;
    border-radius: 8px;
    background: #c9c7f5;
    color: var(--brand);
    font-size: 16px;
  }
  h5 {
    margin: 10px 0 4px;
    font-size: 13px;
    line-height: 22px;
    font-weight: 700;
  }
  article p {
    font-size: 14px;
    line-height: 22px;
    color: var(--muted);
  }
  .submit {
    display: flex;
    justify-content: flex-end;
    margin-top: 24px;
  }
  .taskbar {
    flex: none;
    height: 3px;
    display: flex;
    padding-left: 72px;
    background: #2a2a2a;
  }
  .pale {
    width: 28%;
    border-top: 2px solid #b5b5b5;
    background: #fff;
  }
  .mid {
    width: 4%;
    margin-left: 36%;
    background: #555;
  }
</style>
